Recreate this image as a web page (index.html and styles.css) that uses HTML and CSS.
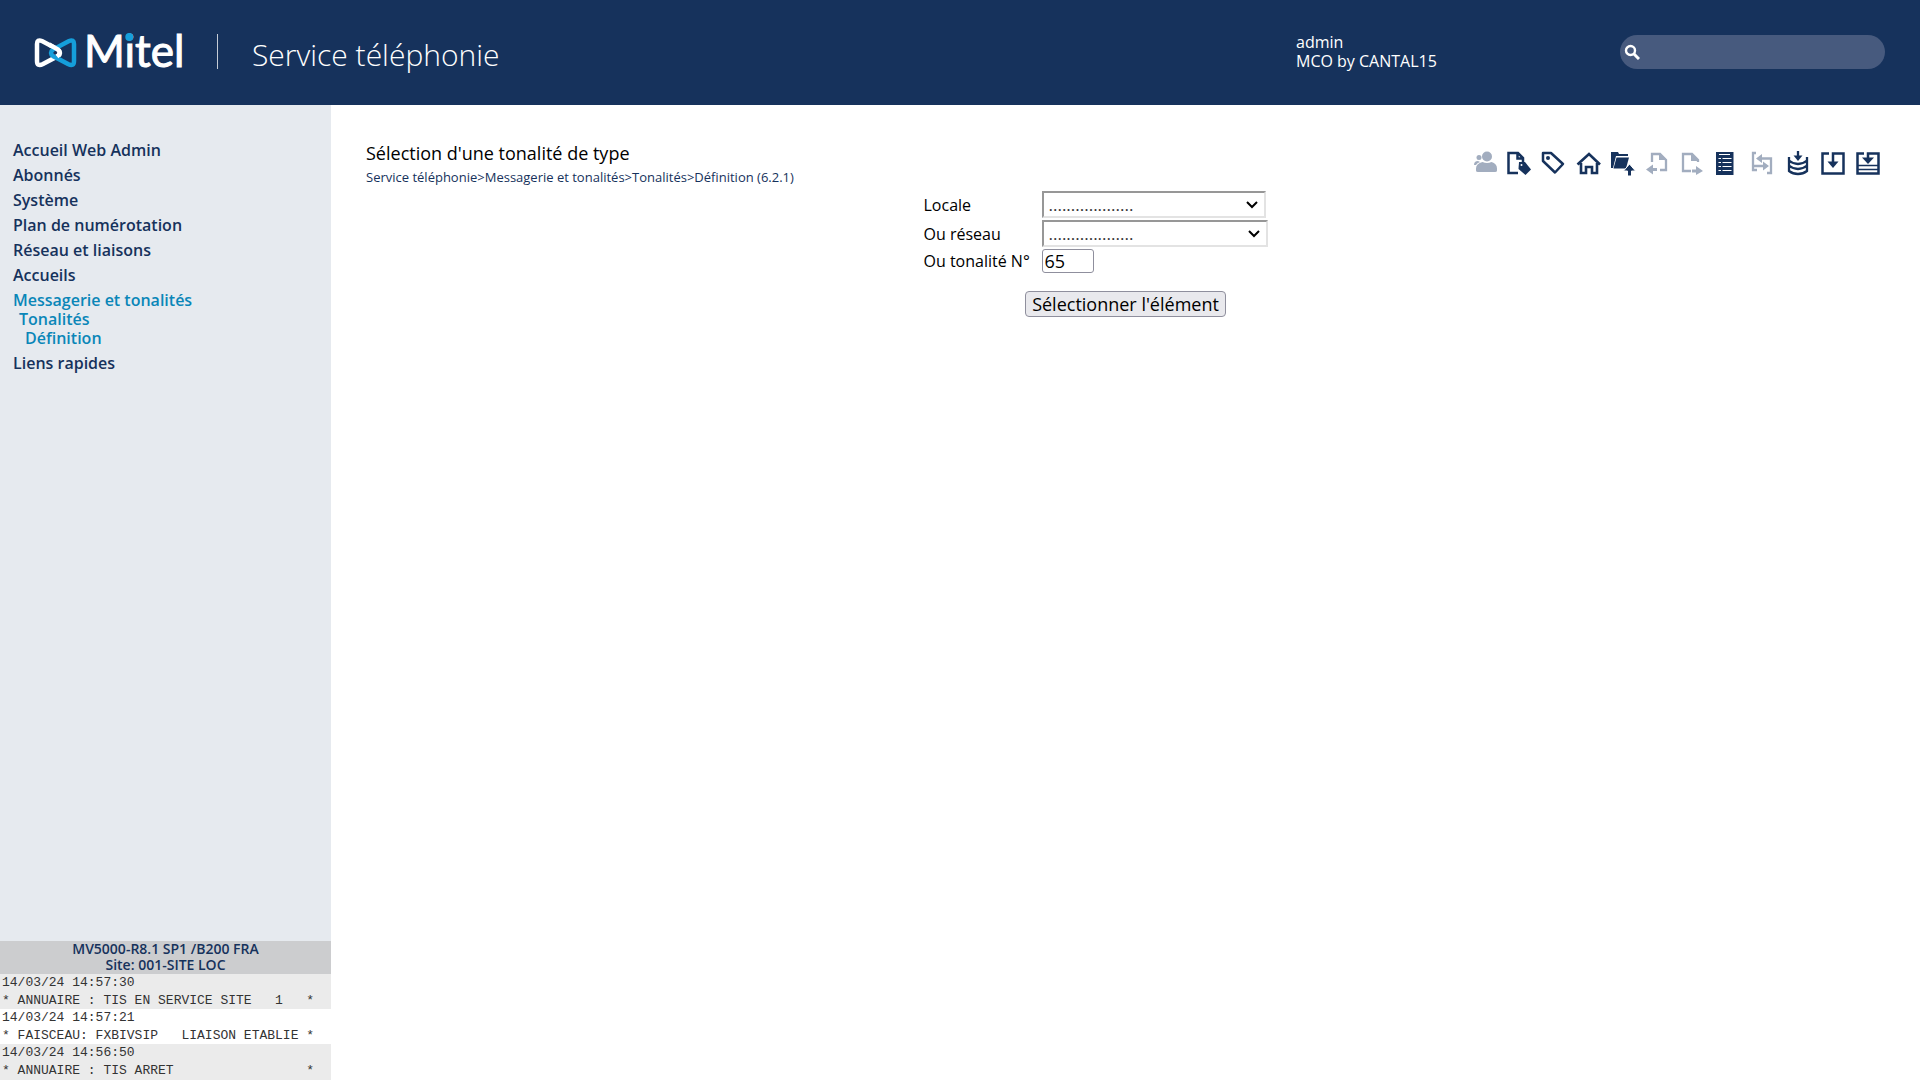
FILE: index.html
```
<!DOCTYPE html>
<html lang="fr">
<head>
<meta charset="utf-8">
<title>Mitel - Service téléphonie</title>
<link rel="stylesheet" href="styles.css">
</head>
<body>
<header class="topbar">
  <svg class="logo" width="148" height="60" viewBox="0 -10 148 60" role="img" aria-label="Mitel">
    <g fill="none" stroke-width="4.500" transform="translate(0 1)">
      <path class="knot-white" d="M2 11Q2 6 7 8L23 16.500Q27 20 23 23L8 31Q2 34 2 28Z"/>
      <path class="knot-blue" d="M39 11Q39 6 34 8L18 16.500Q14 20 18 23L33 31Q39 34 39 28Z"/>
      <path class="knot-white" d="M14 11.600L23 16.500Q26.500 20 22 23.500"/>
    </g>
    <text class="logo-text" x="49" y="35">Mitel</text>
    <circle class="logo-dot" cx="94.300" cy="5" r="4"/>
  </svg>
  <span class="divider"></span>
  <h1 class="app-title">Service téléphonie</h1>
  <div class="user">admin<br>MCO by CANTAL15</div>
  <form class="search" role="search">
    <svg width="16" height="16" viewBox="0 0 16 16" fill="none" stroke="#fff" aria-hidden="true"><circle cx="6.500" cy="6.500" r="4.500" stroke-width="2.400"/><path d="M10 10l5 5" stroke-width="3"/></svg>
    <input class="search-input" type="search" aria-label="Rechercher">
  </form>
</header>
<div class="layout">
  <aside class="sidebar">
    <nav>
      <ul class="menu">
        <li><a href="#">Accueil Web Admin</a></li>
        <li><a href="#">Abonnés</a></li>
        <li><a href="#">Système</a></li>
        <li><a href="#">Plan de numérotation</a></li>
        <li><a href="#">Réseau et liaisons</a></li>
        <li><a href="#">Accueils</a></li>
        <li class="open"><a href="#">Messagerie et tonalités</a>
          <ul>
            <li><a href="#">Tonalités</a>
              <ul><li><a href="#">Définition</a></li></ul>
            </li>
          </ul>
        </li>
        <li><a href="#">Liens rapides</a></li>
      </ul>
    </nav>
    <section class="status">
      <h2 class="site">MV5000-R8.1 SP1 /B200 FRA<br>Site: 001-SITE LOC</h2>
      <ul class="log">
        <li><span>14/03/24 14:57:30</span><span>* ANNUAIRE : TIS EN SERVICE SITE   1   *</span></li>
        <li><span>14/03/24 14:57:21</span><span>* FAISCEAU: FXBIVSIP   LIAISON ETABLIE *</span></li>
        <li><span>14/03/24 14:56:50</span><span>* ANNUAIRE : TIS ARRET                 *</span></li>
      </ul>
    </section>
  </aside>
  <main class="content">
    <div class="page-head">
      <div>
        <h2 class="page-title">Sélection d'une tonalité de type</h2>
        <nav class="crumbs"><a href="#">Service téléphonie</a>&gt;<a href="#">Messagerie et tonalités</a>&gt;<a href="#">Tonalités</a>&gt;<a href="#">Définition (6.2.1)</a></nav>
      </div>
      <div class="tools">
        <button class="tool off" type="button" aria-label="Abonnés"><svg viewBox="0 0 24 24"><g fill="currentColor"><circle cx="16" cy="5.500" r="5"/><path d="M5 19.500v-2q0-5 6.500-6.500q4.500 2 9 0q5.500 1.500 5.500 6.500v2q0 1.500-2 1.500H7q-2 0-2-1.500z"/><circle cx="8" cy="6.500" r="2.500"/><path d="M3 14q0-4 4-4l2 1q-3 1-4 3z"/></g></svg></button>
        <button class="tool" type="button" aria-label="Étiqueter la page"><svg viewBox="0 0 24 24"><path d="M12 22H2.500V2H12l5 5v4M11.500 2v5.500H17" fill="none" stroke="currentColor" stroke-width="2.500"/><path d="M13 11h6l6 7.500-5.500 5.500-7-6z" fill="currentColor"/><circle cx="15.500" cy="14" r="1" fill="#fff"/></svg></button>
        <button class="tool" type="button" aria-label="Étiquette"><svg viewBox="0 0 24 24"><path d="M2 2h8l12 11-8 8.500L2 10z" fill="none" stroke="currentColor" stroke-width="2.500" stroke-linejoin="round"/><circle cx="7" cy="7" r="2" fill="currentColor"/></svg></button>
        <button class="tool" type="button" aria-label="Accueil"><svg viewBox="0 0 24 24"><path d="M1.500 13.500L13 3l11 10.500M5 12v10h5v-6h6v6h5V12" fill="none" stroke="currentColor" stroke-width="2.600"/></svg></button>
        <button class="tool" type="button" aria-label="Envoyer le dossier"><svg viewBox="0 0 24 24"><g fill="currentColor"><path d="M0 1h7l1 2h9v2H5L2 17H0z"/><path d="M5.500 6.500H18L15 17.500H2.500z"/><path d="M16.500 25v-5H12.500l6-7 6 7h-4v5z" stroke="#fff"/></g></svg></button>
        <button class="tool off" type="button" aria-label="Page précédente"><svg viewBox="0 0 24 24"><path d="M6 11V3h8l6 6v10h-6" fill="none" stroke="currentColor" stroke-width="2.300"/><path d="M13 2l8 7h-8zM0 18.500l7-5v3.500h4v3H7v3.500z" fill="currentColor"/></svg></button>
        <button class="tool off" type="button" aria-label="Page suivante"><svg viewBox="0 0 24 24"><path d="M17 11V9l-6-6H2v17h8" fill="none" stroke="currentColor" stroke-width="2.300"/><path d="M10 2l8 8h-8zM22 20l-7-5v3.500h-4v3h4V24z" fill="currentColor"/></svg></button>
        <button class="tool" type="button" aria-label="Liste"><svg viewBox="0 0 24 24"><path d="M0 1h17.500v23H0z" fill="currentColor"/><path d="M3 3.500h11M2.500 7.500H5M6.500 7.500h9M2.500 11.500H5M6.500 11.500h9M2.500 15.500H5M6.500 15.500h9M2.500 19.500H5M6.500 19.500h9" stroke="#fff" stroke-width="1.200"/></svg></button>
        <button class="tool off" type="button" aria-label="Échanger"><svg viewBox="0 0 24 24"><path d="M5 2H2v17h4M7 7.500h13V22h-4M2 15h12" fill="none" stroke="currentColor" stroke-width="2.300"/><path d="M5 7.500l6-4.500v9zM18 15l-6-4.500v9z" fill="currentColor"/></svg></button>
        <button class="tool" type="button" aria-label="Charger la base"><svg viewBox="0 0 24 24"><path d="M3 6v14q4 3 9 3t9-3V6M3 9.500q4 3.500 9 3.500t9-3.500M3 14.500q4 3.500 9 3.500t9-3.500M12 0v7" fill="none" stroke="currentColor" stroke-width="2.300"/><path d="M7.500 4.500h9L12 10z" fill="currentColor"/></svg></button>
        <button class="tool" type="button" aria-label="Télécharger"><svg viewBox="0 0 24 24"><path d="M8 2.500H1.500v20h21v-20H12v10" fill="none" stroke="currentColor" stroke-width="2.500"/><path d="M6.500 10.500h11L12 17z" fill="currentColor"/></svg></button>
        <button class="tool" type="button" aria-label="Télécharger tout"><svg viewBox="0 0 24 24"><path d="M8 2.500H1.500v20h21v-20H12v6" fill="none" stroke="currentColor" stroke-width="2.500"/><path d="M2 14.500h20M2 18.500h20" stroke="currentColor" stroke-width="1.500"/><path d="M6 6.500h12L12 13z" fill="currentColor"/></svg></button>
      </div>
    </div>
    <form class="picker">
      <div class="fields">
        <label for="locale">Locale</label>
        <div class="select first">
          <select id="locale"><option>...................</option></select>
          <svg width="12" height="8" viewBox="0 0 12 8" aria-hidden="true"><path d="M1 1l5 5 5-5" fill="none" stroke="#000" stroke-width="2"/></svg>
        </div>
        <label for="reseau">Ou réseau</label>
        <div class="select">
          <select id="reseau"><option>...................</option></select>
          <svg width="12" height="8" viewBox="0 0 12 8" aria-hidden="true"><path d="M1 1l5 5 5-5" fill="none" stroke="#000" stroke-width="2"/></svg>
        </div>
        <label for="numero">Ou tonalité N°</label>
        <input id="numero" class="number" type="text" value="65">
      </div>
      <button class="submit" type="button">Sélectionner l'élément</button>
    </form>
  </main>
</div>
</body>
</html>
```
FILE: styles.css
```
* {
  box-sizing: border-box;
}

body {
  margin: 0;
  min-height: 100vh;
  display: flex;
  flex-direction: column;
  background: #fff;
  color: #000;
  font: 16px/20px "Open Sans", "Noto Sans", sans-serif;
}

h1, h2, ul {
  margin: 0;
  padding: 0;
  font-weight: 400;
}

ul {
  list-style: none;
}

a {
  color: inherit;
  text-decoration: none;
}

/* Top bar */
.topbar {
  display: flex;
  align-items: center;
  height: 105px;
  padding: 0 35px 2px;
  background: #16325c;
  color: #fff;
}

.logo {
  flex: none;
  overflow: visible;
}

.knot-white {
  stroke: #fff;
}

.knot-blue {
  stroke: #159fdb;
}

.logo-text {
  fill: #fff;
  stroke: #fff;
  stroke-width: 1px;
  font: 400 44px Lato, sans-serif;
}

.logo-dot {
  fill: #159fdb;
}

.divider {
  width: 1px;
  height: 35px;
  margin: 0 34px;
  background: #c5ccd6;
}

.app-title {
  flex: 1;
  padding-top: 6px;
  font-size: 30px;
  font-weight: 300;
  line-height: 40px;
}

.user {
  width: 324px;
  line-height: 19px;
}

.search {
  display: flex;
  align-items: center;
  gap: 4px;
  width: 265px;
  height: 34px;
  padding: 0 16px 0 4px;
  border-radius: 17px;
  background: #475a7e;
}

.search-input {
  flex: 1;
  min-width: 0;
  border: 0;
  background: none;
  color: #fff;
  font: inherit;
  outline: 0;
}

/* Two-column layout */
.layout {
  flex: 1;
  display: grid;
  grid-template-columns: 331px 1fr;
}

.sidebar {
  display: flex;
  flex-direction: column;
  justify-content: space-between;
  background: #e6eaef;
}

.menu {
  display: grid;
  gap: 6px;
  padding: 36px 13px;
  color: #16325c;
  font-weight: 600;
  line-height: 19px;
}

.menu .open {
  color: #0a86b8;
}

.menu ul {
  padding-left: 6px;
  font-weight: 600;
}

.site {
  height: 33px;
  background: #cccdcf;
  color: #16325c;
  font-size: 14px;
  font-weight: 600;
  line-height: 16px;
  text-align: center;
}

.log {
  padding-bottom: 1px;
  background: #ebebeb;
  color: #333;
  font: 13px/17px "Liberation Mono", monospace;
}

.log li {
  display: grid;
  gap: 1px;
  padding-left: 2px;
}

.log li:nth-child(even) {
  background: #fff;
}

.log span {
  white-space: pre;
}

/* Page heading and toolbar */
.page-head {
  display: flex;
  justify-content: space-between;
  align-items: flex-start;
  padding: 36px 40px 0 35px;
}

.page-title {
  font-size: 18px;
  line-height: 24px;
}

.crumbs {
  padding-top: 3px;
  color: #16325c;
  font-size: 13px;
  line-height: 18px;
}

.tools {
  display: flex;
  gap: 11px;
  padding-top: 10px;
}

.tool {
  width: 24px;
  height: 24px;
  padding: 0;
  border: 0;
  background: none;
  color: #16325c;
}

.tool svg {
  display: block;
  overflow: visible;
}

.off {
  color: #a2adbf;
}

/* Tone selection form */
.picker {
  display: flex;
  flex-direction: column;
  align-items: center;
  gap: 18px;
  padding-top: 5px;
}

.fields {
  display: grid;
  grid-template-columns: 118px 286px;
  align-items: center;
  row-gap: 2px;
}

.select {
  display: grid;
  grid-template-columns: 1fr 20px;
  align-items: center;
  width: 226px;
}

.first {
  width: 224px;
}

.select select {
  grid-area: 1 / 1 / 2 / 3;
  height: 27px;
  padding: 0 5px;
  border: 2px solid;
  border-color: #979797 #e3e3e3 #e3e3e3 #979797;
  background: #fff;
  color: #333;
  font: 17px/20px "Open Sans", "Noto Sans", sans-serif;
  appearance: none;
}

.select svg {
  grid-area: 1 / 2;
  pointer-events: none;
}

.number {
  width: 52px;
  height: 24px;
  padding: 0 2px;
  border: 1px solid #8f8f9d;
  border-radius: 3px;
  font: 18px/20px "Open Sans", "Noto Sans", sans-serif;
}

.submit {
  height: 26px;
  padding: 0 6px;
  border: 1px solid #8f8f9d;
  border-radius: 4px;
  background: #e9e9ed;
  color: #000;
  font: 18px/22px "Open Sans", "Noto Sans", sans-serif;
}
```
